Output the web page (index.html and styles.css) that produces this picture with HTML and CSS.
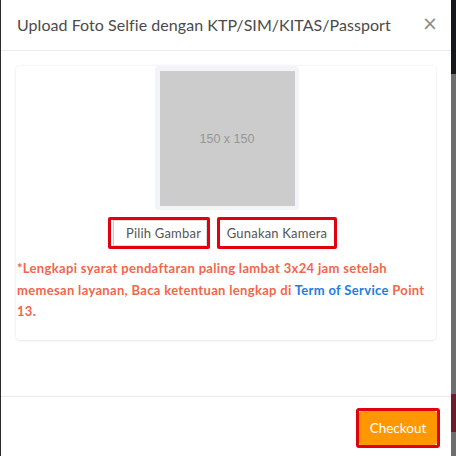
FILE: index.html
```html
<!DOCTYPE html>
<html lang="id">
<head>
<meta charset="utf-8">
<title>Upload Foto Selfie</title>
<link rel="stylesheet" href="styles.css">
</head>
<body>
<div class="modal">
  <div class="modal-header">
    <h5 class="modal-title">Upload Foto Selfie dengan KTP/SIM/KITAS/Passport</h5>
    <button class="close" type="button">&times;</button>
  </div>
  <div class="modal-body">
    <div class="card">
      <div class="preview">
        <div class="placeholder">150 x 150</div>
      </div>
      <div class="actions">
        <span class="hl"><button class="btn-file" type="button">Pilih Gambar</button></span>
        <span class="hl"><button class="btn-cam" type="button">Gunakan Kamera</button></span>
      </div>
      <p class="note">*Lengkapi syarat pendaftaran paling lambat 3x24 jam setelah memesan layanan, Baca ketentuan lengkap di <a href="#">Term of Service</a> Point 13.</p>
    </div>
  </div>
  <div class="modal-footer">
    <span class="hl hl-co"><button class="btn-checkout" type="button">Checkout</button></span>
  </div>
</div>
<div class="backdrop"></div>
</body>
</html>
```
FILE: styles.css
```css
html, body {
  margin: 0;
  padding: 0;
  height: 456px;
  overflow: hidden;
}
body {
  display: flex;
  font-family: "Lato", "Open Sans", sans-serif;
  background: #2b2b2b;
}
.modal {
  width: 450px;
  margin-left: 1px;
  background: #fff;
  display: flex;
  flex-direction: column;
}
.backdrop {
  flex: 1;
  background: linear-gradient(to bottom, #16161d 0, #16161d 74px, #6e6e6e 74px, #6e6e6e 394px, #6a1d2a 394px, #6a1d2a 432px, #6e6e6e 432px);
}
.modal-header {
  height: 51px;
  border-bottom: 1px solid #e9ecef;
  display: flex;
  align-items: center;
  justify-content: space-between;
  padding: 0 13px 0 16px;
  box-sizing: border-box;
}
.modal-title {
  margin: 0;
  font-size: 16px;
  font-weight: 400;
  color: #4a4a4a;
  padding-bottom: 2px;
  letter-spacing: 0.05px;
}
.close {
  border: 0;
  background: none;
  padding: 0;
  font-family: "DejaVu Sans", sans-serif;
  font-size: 19px;
  color: #8a8a8a;
  line-height: 1;
  margin-bottom: 4px;
}
.modal-body {
  padding: 15px 15px 56px 15px;
}
.card {
  border-radius: 4px;
  box-shadow: 0 0 3px rgba(0,0,0,0.09), 0 1px 2px rgba(0,0,0,0.06);
  padding: 0 0 17px 1px;
  display: flex;
  flex-direction: column;
  align-items: center;
}
.preview {
  width: 144px;
  height: 144px;
  background: #f2f4f7;
  border-radius: 4px;
  padding: 5px 4px 4px 5px;
  box-sizing: border-box;
}
.placeholder {
  width: 135px;
  height: 135px;
  background: #cccccc;
  color: #969696;
  font-family: "Liberation Sans", Arial, sans-serif;
  font-size: 12.5px;
  display: flex;
  align-items: center;
  justify-content: center;
}
.actions {
  display: flex;
  gap: 7px;
  margin-top: 7px;
  margin-right: 8px;
}
.hl {
  display: inline-block;
  border: 3px solid #e0000f;
  border-radius: 2px;
}
.actions button {
  font-family: "Lato", "Open Sans", sans-serif;
  font-size: 13px;
  letter-spacing: 0.2px;
  color: #555;
  background: #fff;
  height: 26px;
  display: block;
  padding: 0;
}
.btn-file {
  border: 1px solid #dcdcdc;
  border-left: 1px solid #c9c9c9;
  width: 94px;
  margin-left: 2px;
  padding-left: 7px !important;
}
.btn-cam {
  border: 0;
  width: 114px;
}
.note {
  margin: 9px 0 0 0;
  align-self: stretch;
  padding-right: 2px;
  color: #f2664b;
  font-size: 13px;
  font-weight: 700;
  letter-spacing: 0.33px;
  line-height: 21.5px;
}
.note a {
  color: #1b7ee0;
  text-decoration: none;
}
.modal-footer {
  border-top: 1px solid #e9ecef;
  display: flex;
  justify-content: flex-end;
  padding: 11px 11px 0 0;
}
.hl-co {
  border-radius: 3px;
}
.btn-checkout {
  display: block;
  width: 78px;
  height: 34px;
  background: #ff9800;
  border: 0;
  border-radius: 3px;
  color: #fff;
  font-family: "Lato", "Open Sans", sans-serif;
  font-size: 13.5px;
  padding: 0;
}
```
